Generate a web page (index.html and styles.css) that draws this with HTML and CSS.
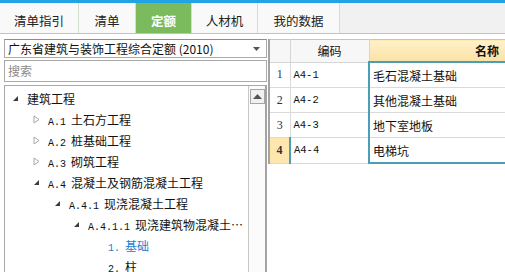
FILE: index.html
```html
<!DOCTYPE html>
<html lang="zh-CN">
<head>
    <meta charset="UTF-8">
    <title>定额</title>
    <link rel="stylesheet" href="styles.css">
</head>
<body>
    <div class="topline"></div>

    <!-- Tab bar -->
    <div class="tabs">
        <div class="tab t1">清单指引</div>
        <div class="tab t2">清单</div>
        <div class="tab t3 active">定额</div>
        <div class="tab t4">人材机</div>
        <div class="tab t5">我的数据</div>
    </div>

    <div class="main">
        <!-- Left side: quota book + tree -->
        <div class="left">
            <div class="combo">
                <span class="combo-text">广东省建筑与装饰工程综合定额 (2010)</span>
                <svg class="combo-arrow" width="7" height="4" viewBox="0 0 7 4"><polygon points="0,0 7,0 3.5,4" fill="#555"/></svg>
            </div>
            <div class="search">搜索</div>
            <div class="treebox">
                <div class="tree">
                    <div class="node lv0"><span class="tog"><svg width="7" height="7" viewBox="0 0 7 7"><polygon points="6,1 6,6 1,6" fill="#3c3c3c"/></svg></span><span>建筑工程</span></div>
                    <div class="node lv1"><span class="tog"><svg width="7" height="9" viewBox="0 0 7 9"><polygon points="1,1 6,4.5 1,8" fill="none" stroke="#a8a8a8"/></svg></span><span><span class="asc">A.1</span>土石方工程</span></div>
                    <div class="node lv1"><span class="tog"><svg width="7" height="9" viewBox="0 0 7 9"><polygon points="1,1 6,4.5 1,8" fill="none" stroke="#a8a8a8"/></svg></span><span><span class="asc">A.2</span>桩基础工程</span></div>
                    <div class="node lv1"><span class="tog"><svg width="7" height="9" viewBox="0 0 7 9"><polygon points="1,1 6,4.5 1,8" fill="none" stroke="#a8a8a8"/></svg></span><span><span class="asc">A.3</span>砌筑工程</span></div>
                    <div class="node lv1"><span class="tog"><svg width="7" height="7" viewBox="0 0 7 7"><polygon points="6,1 6,6 1,6" fill="#3c3c3c"/></svg></span><span><span class="asc">A.4</span>混凝土及钢筋混凝土工程</span></div>
                    <div class="node lv2"><span class="tog"><svg width="7" height="7" viewBox="0 0 7 7"><polygon points="6,1 6,6 1,6" fill="#3c3c3c"/></svg></span><span><span class="asc">A.4.1</span>现浇混凝土工程</span></div>
                    <div class="node lv3"><span class="tog"><svg width="7" height="7" viewBox="0 0 7 7"><polygon points="6,1 6,6 1,6" fill="#3c3c3c"/></svg></span><span class="label"><span class="asc">A.4.1.1</span>现浇建筑物混凝土工程</span></div>
                    <div class="node lv4 current"><span><span class="asc">1.</span>基础</span></div>
                    <div class="node lv4"><span><span class="asc">2.</span>柱</span></div>
                </div>
                <div class="vscroll">
                    <div class="up-btn"><svg width="9" height="5" viewBox="0 0 9 5"><polygon points="0,5 9,5 4.5,0" fill="#555"/></svg></div>
                </div>
            </div>
        </div>

        <!-- Right side: quota list -->
        <div class="right">
            <table class="grid">
                <colgroup>
                    <col class="c-num">
                    <col class="c-code">
                    <col class="c-name">
                </colgroup>
                <thead>
                    <tr>
                        <th></th>
                        <th>编码</th>
                        <th class="h-name">名称</th>
                    </tr>
                </thead>
                <tbody>
                    <tr>
                        <td class="num">1</td>
                        <td class="code">A4-1</td>
                        <td class="name first">毛石混凝土基础</td>
                    </tr>
                    <tr>
                        <td class="num">2</td>
                        <td class="code">A4-2</td>
                        <td class="name">其他混凝土基础</td>
                    </tr>
                    <tr>
                        <td class="num">3</td>
                        <td class="code">A4-3</td>
                        <td class="name">地下室地板</td>
                    </tr>
                    <tr class="selected">
                        <td class="num">4</td>
                        <td class="code">A4-4</td>
                        <td class="name last">电梯坑</td>
                    </tr>
                </tbody>
            </table>
        </div>
    </div>
</body>
</html>
```

FILE: styles.css
```css
body {
    margin: 0;
    padding: 0;
    width: 505px;
    height: 272px;
    overflow: hidden;
    background-color: #fff;
    font-family: "Noto Sans CJK SC", sans-serif;
    font-size: 12px;
    color: #111;
}
.asc {
    font-family: "Liberation Mono", monospace;
    font-size: 10px;
    margin-right: 5px;
}
.topline {
    height: 3px;
    background-color: #21a3e6;
}
.tabs {
    display: flex;
    height: 30px;
    background-color: #f1f1f1;
    border-bottom: 1px solid #b3cfa5;
}
.tab {
    display: flex;
    align-items: center;
    justify-content: center;
    box-sizing: border-box;
    height: 100%;
    padding-top: 4px;
    background-color: #f8f9f8;
    border-right: 1px solid #d3dfcd;
    font-size: 12.5px;
    color: #222;
}
.tab.t1 { width: 79px; }
.tab.t2 { width: 57px; }
.tab.t3 { width: 56px; }
.tab.t4 { width: 66px; }
.tab.t5 { width: 82px; }
.tab.active {
    background-color: #7bbb5e;
    color: #fff;
    font-weight: bold;
}
.main {
    display: flex;
    height: 238px;
}
.left {
    width: 263px;
    padding: 5px 0 0 4px;
    display: flex;
    flex-direction: column;
}
.combo {
    display: flex;
    align-items: center;
    height: 21px;
    border: 1px solid #a9a9a9;
    border-top-color: #8c8c8c;
    padding: 0 0 0 3px;
}
.combo-text {
    flex: 1;
    white-space: nowrap;
    overflow: hidden;
}
.combo-arrow {
    margin-right: 6px;
}
.search {
    margin-top: 2px;
    height: 20px;
    line-height: 20px;
    border: 1px solid #a9a9a9;
    padding-left: 3px;
    color: #8a8a8a;
}
.treebox {
    margin-top: 3px;
    flex: 1;
    display: flex;
    border: 1px solid #a9a9a9;
    border-bottom: none;
    border-right: 2px solid #a3a3a3;
}
.tree {
    flex: 1;
    min-width: 0;
    padding-top: 2px;
    overflow: hidden;
}
.node {
    display: flex;
    align-items: center;
    height: 21px;
    white-space: nowrap;
}
.node .tog {
    flex: none;
    width: 15px;
    display: flex;
    align-items: center;
}
.node .label {
    overflow: hidden;
    text-overflow: ellipsis;
    padding-right: 2px;
}
.lv0 { padding-left: 7px; }
.lv1 { padding-left: 28px; }
.lv2 { padding-left: 49px; }
.lv3 { padding-left: 68px; }
.lv4 { padding-left: 103px; }
.node.current {
    color: #1b80d2;
}
.vscroll {
    flex: none;
    width: 16px;
    border-left: 1px solid #c8c8c8;
    background-color: #fbfbfb;
    padding-top: 3px;
}
.up-btn {
    margin-left: 1px;
    width: 13px;
    height: 13px;
    border: 1px solid #a6a6a6;
    background-color: #f1f1f1;
    display: flex;
    align-items: center;
    justify-content: center;
}
.right {
    flex: 1;
    padding: 5px 0 0 1px;
    overflow: hidden;
}
.grid {
    table-layout: fixed;
    width: 336px;
    border-collapse: collapse;
    border-left: 2px solid #a3a3a3;
}
.c-num { width: 21px; }
.c-code { width: 79px; }
.c-name { width: 236px; }
th {
    height: 21px;
    font-weight: normal;
    background-color: #f7f7f7;
    border: 1px solid #d6d6d6;
    border-top-color: #c4c4c4;
    padding: 0;
    text-align: center;
}
th.h-name {
    background: linear-gradient(#fff1c9, #fbe2a6);
    font-weight: bold;
}
td {
    height: 24px;
    border: 1px solid #dadada;
    padding: 0 0 0 3px;
    white-space: nowrap;
    overflow: hidden;
}
td.num {
    text-align: center;
    padding: 0;
    font-family: "Liberation Serif", serif;
    font-size: 12px;
    color: #333;
}
td.code {
    font-family: "Liberation Mono", monospace;
    font-size: 10.5px;
}
td.name {
    border-left: 2px solid #4a9fb6;
}
td.name.first {
    border-top: 2px solid #4a9fb6;
}
td.name.last {
    border-bottom: 2px solid #4a9fb6;
}
.selected td.num {
    background-color: #fde7ae;
    font-weight: bold;
}
.selected td.code {
    border-left: 2px solid #4a9fb6;
}
```
